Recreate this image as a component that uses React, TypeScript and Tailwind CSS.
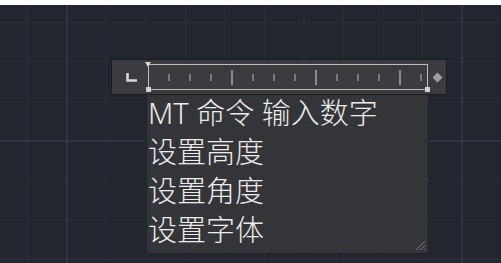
const ticks = Array.from({ length: 13 }, (_, i) => i + 1);
const items = ['设置高度', '设置角度', '设置字体'];

function GridBackdrop() {
  const minorX = [-12, 27.5, 106.5, 146, 185.5, 225, 264.5, 304, 343.5, 383, 422.5, 501.5];
  const minorY = [22.5, 62, 101.5, 180.5, 220, 259.5];
  return (
    <svg className="absolute inset-0 h-full w-full" width="501" height="258">
      {minorX.map((x) => (
        <line key={`vx${x}`} x1={x} y1={0} x2={x} y2={258} stroke="#282d37" strokeWidth="1" />
      ))}
      {minorY.map((y) => (
        <line key={`hy${y}`} x1={0} y1={y - 5} x2={501} y2={y - 5} stroke="#282d37" strokeWidth="1" />
      ))}
      <line x1={67} y1={0} x2={67} y2={258} stroke="#363d48" strokeWidth="1.5" />
      <line x1={462} y1={0} x2={462} y2={258} stroke="#363d48" strokeWidth="1.5" />
      <line x1={0} y1={136} x2={501} y2={136} stroke="#363d48" strokeWidth="1.5" />
    </svg>
  );
}

function Ruler() {
  return (
    <div className="relative h-[26px] w-[280px] border border-[#bdbdbd]">
      {/* left marker: triangle on top, square at bottom */}
      <div className="absolute -left-[4px] -top-[3px] h-0 w-0 border-x-[3.5px] border-t-[5px] border-x-transparent border-t-[#d8d8d8]" />
      <div className="absolute -left-[3px] -bottom-[3px] h-[5px] w-[5px] bg-[#d0d0d0]" />
      <div className="absolute -right-[3px] -bottom-[3px] h-[5px] w-[5px] bg-[#d0d0d0]" />
      <div className="flex h-full items-center pl-[19px]">
        {ticks.map((t) => (
          <div key={t} className="flex w-[21px] shrink-0 items-center">
            <div
              className={
                t % 4 === 0
                  ? 'h-[15px] w-[2px] bg-[#8c8c8c]'
                  : 'h-[7px] w-[1.5px] bg-[#7a7a7a]'
              }
            />
          </div>
        ))}
      </div>
    </div>
  );
}

export default function App() {
  return (
    <div className="h-[263px] w-[501px] overflow-hidden bg-white pt-[5px]">
      <div className="relative h-[258px] w-[501px] bg-[#21262f]">
        <GridBackdrop />
        <div className="relative flex flex-col pl-[111px] pt-[54px]">
          {/* text formatting ruler bar */}
          <div className="flex h-[36px] w-[336px] items-center border border-[#1c1c1c] bg-[#3b3c3f]">
            <svg width="12" height="10" viewBox="0 0 12 10" className="ml-[14px] mr-[10px]">
              <path d="M1.5 1 V8.5 H11" stroke="#d6d6d6" strokeWidth="2.6" fill="none" />
            </svg>
            <Ruler />
            <div className="ml-[6px] h-[7px] w-[7px] rotate-45 bg-[#a0a0a0]" />
          </div>
          {/* in-place text editor */}
          <div
            className="relative ml-[35px] h-[159px] w-[283px] border border-t-0 border-[#222] bg-[#343538] pl-[1px] text-[29px] font-light leading-[39px] text-[#ececec]"
            style={{ fontFamily: '"Noto Sans", "Noto Sans CJK SC", sans-serif' }}
          >
            <div className="-mt-[2px] flex flex-col">
              <div>MT 命令 输入数字</div>
              {items.map((label) => (
                <div key={label}>{label}</div>
              ))}
            </div>
            <svg width="12" height="12" viewBox="0 0 12 12" className="absolute bottom-[2px] right-[2px]">
              <path d="M11 2 L2 11 M11 6 L6 11 M11 9.5 L9.5 11" stroke="#7a7a7a" strokeWidth="1" />
            </svg>
          </div>
        </div>
      </div>
    </div>
  );
}
